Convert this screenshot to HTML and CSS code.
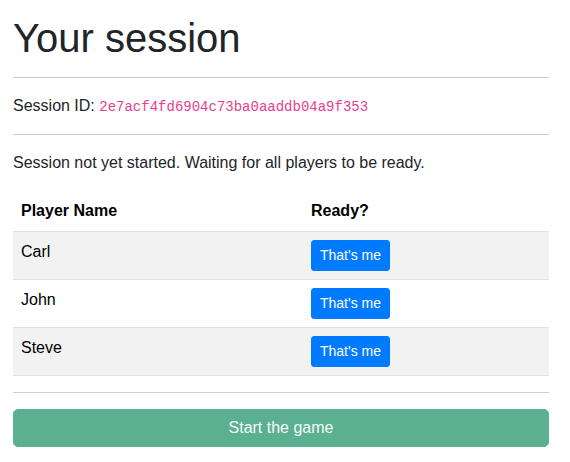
FILE: index.html
```html
<!DOCTYPE html>
<html lang="en">
<head>
<meta charset="utf-8">
<title>Your session</title>
<link rel="stylesheet" href="styles.css">
</head>
<body>
<div class="container">
  <h1 class="title">Your session</h1>
  <hr class="rule">
  <p class="text">Session ID: <code class="code">2e7acf4fd6904c73ba0aaddb04a9f353</code></p>
  <hr class="rule">
  <p class="text">Session not yet started. Waiting for all players to be ready.</p>
  <table class="players">
    <thead>
      <tr><th class="col-name">Player Name</th><th>Ready?</th></tr>
    </thead>
    <tbody>
      <tr class="odd"><td>Carl</td><td><button class="btn-me">That's me</button></td></tr>
      <tr><td>John</td><td><button class="btn-me">That's me</button></td></tr>
      <tr class="odd"><td>Steve</td><td><button class="btn-me">That's me</button></td></tr>
    </tbody>
  </table>
  <hr class="rule">
  <button class="btn-start">Start the game</button>
</div>
</body>
</html>
```
FILE: styles.css
```css
html, body {
  margin: 0;
  padding: 0;
  background: #fff;
}
body {
  font-family: "Liberation Sans", Arial, sans-serif;
  font-size: 16px;
  line-height: 24px;
  color: #212529;
}
.container {
  padding: 14px 21px 0 13px;
}
.title {
  margin: 0;
  font-size: 40px;
  line-height: 48px;
  font-weight: 400;
}
.rule {
  margin: 16px 0;
  border: 0;
  border-top: 1px solid #cfcfcf;
  height: 0;
}
.title + .rule {
  margin-top: 15px;
}
.text {
  margin: 0 0 16px;
}
.code {
  font-family: "Liberation Mono", monospace;
  font-size: 14px;
  line-height: 1;
  color: #e83e8c;
}
.players {
  width: 100%;
  border-collapse: collapse;
  margin-bottom: 16px;
}
.players th,
.players td {
  text-align: left;
  vertical-align: top;
  padding: 8px;
}
.players th {
  font-weight: 700;
  color: #000;
  border-bottom: 1px solid #dee2e6;
}
.players td {
  border-bottom: 1px solid #dee2e6;
  color: #000;
}
.col-name {
  width: 274px;
}
.players tr.odd td {
  background: #f2f2f2;
}
.btn-me {
  display: inline-block;
  font-family: "Liberation Sans", Arial, sans-serif;
  font-size: 14px;
  line-height: 21px;
  padding: 4px 8px;
  border: 1px solid #007bff;
  border-radius: 3px;
  background: #007bff;
  color: #fff;
  vertical-align: middle;
}
.btn-start {
  display: block;
  width: 100%;
  font-family: "Liberation Sans", Arial, sans-serif;
  font-size: 16px;
  line-height: 24px;
  padding: 6px 12px;
  border: 1px solid #5bb092;
  border-radius: 5px;
  background: #5bb092;
  color: #f4faf7;
}
```
